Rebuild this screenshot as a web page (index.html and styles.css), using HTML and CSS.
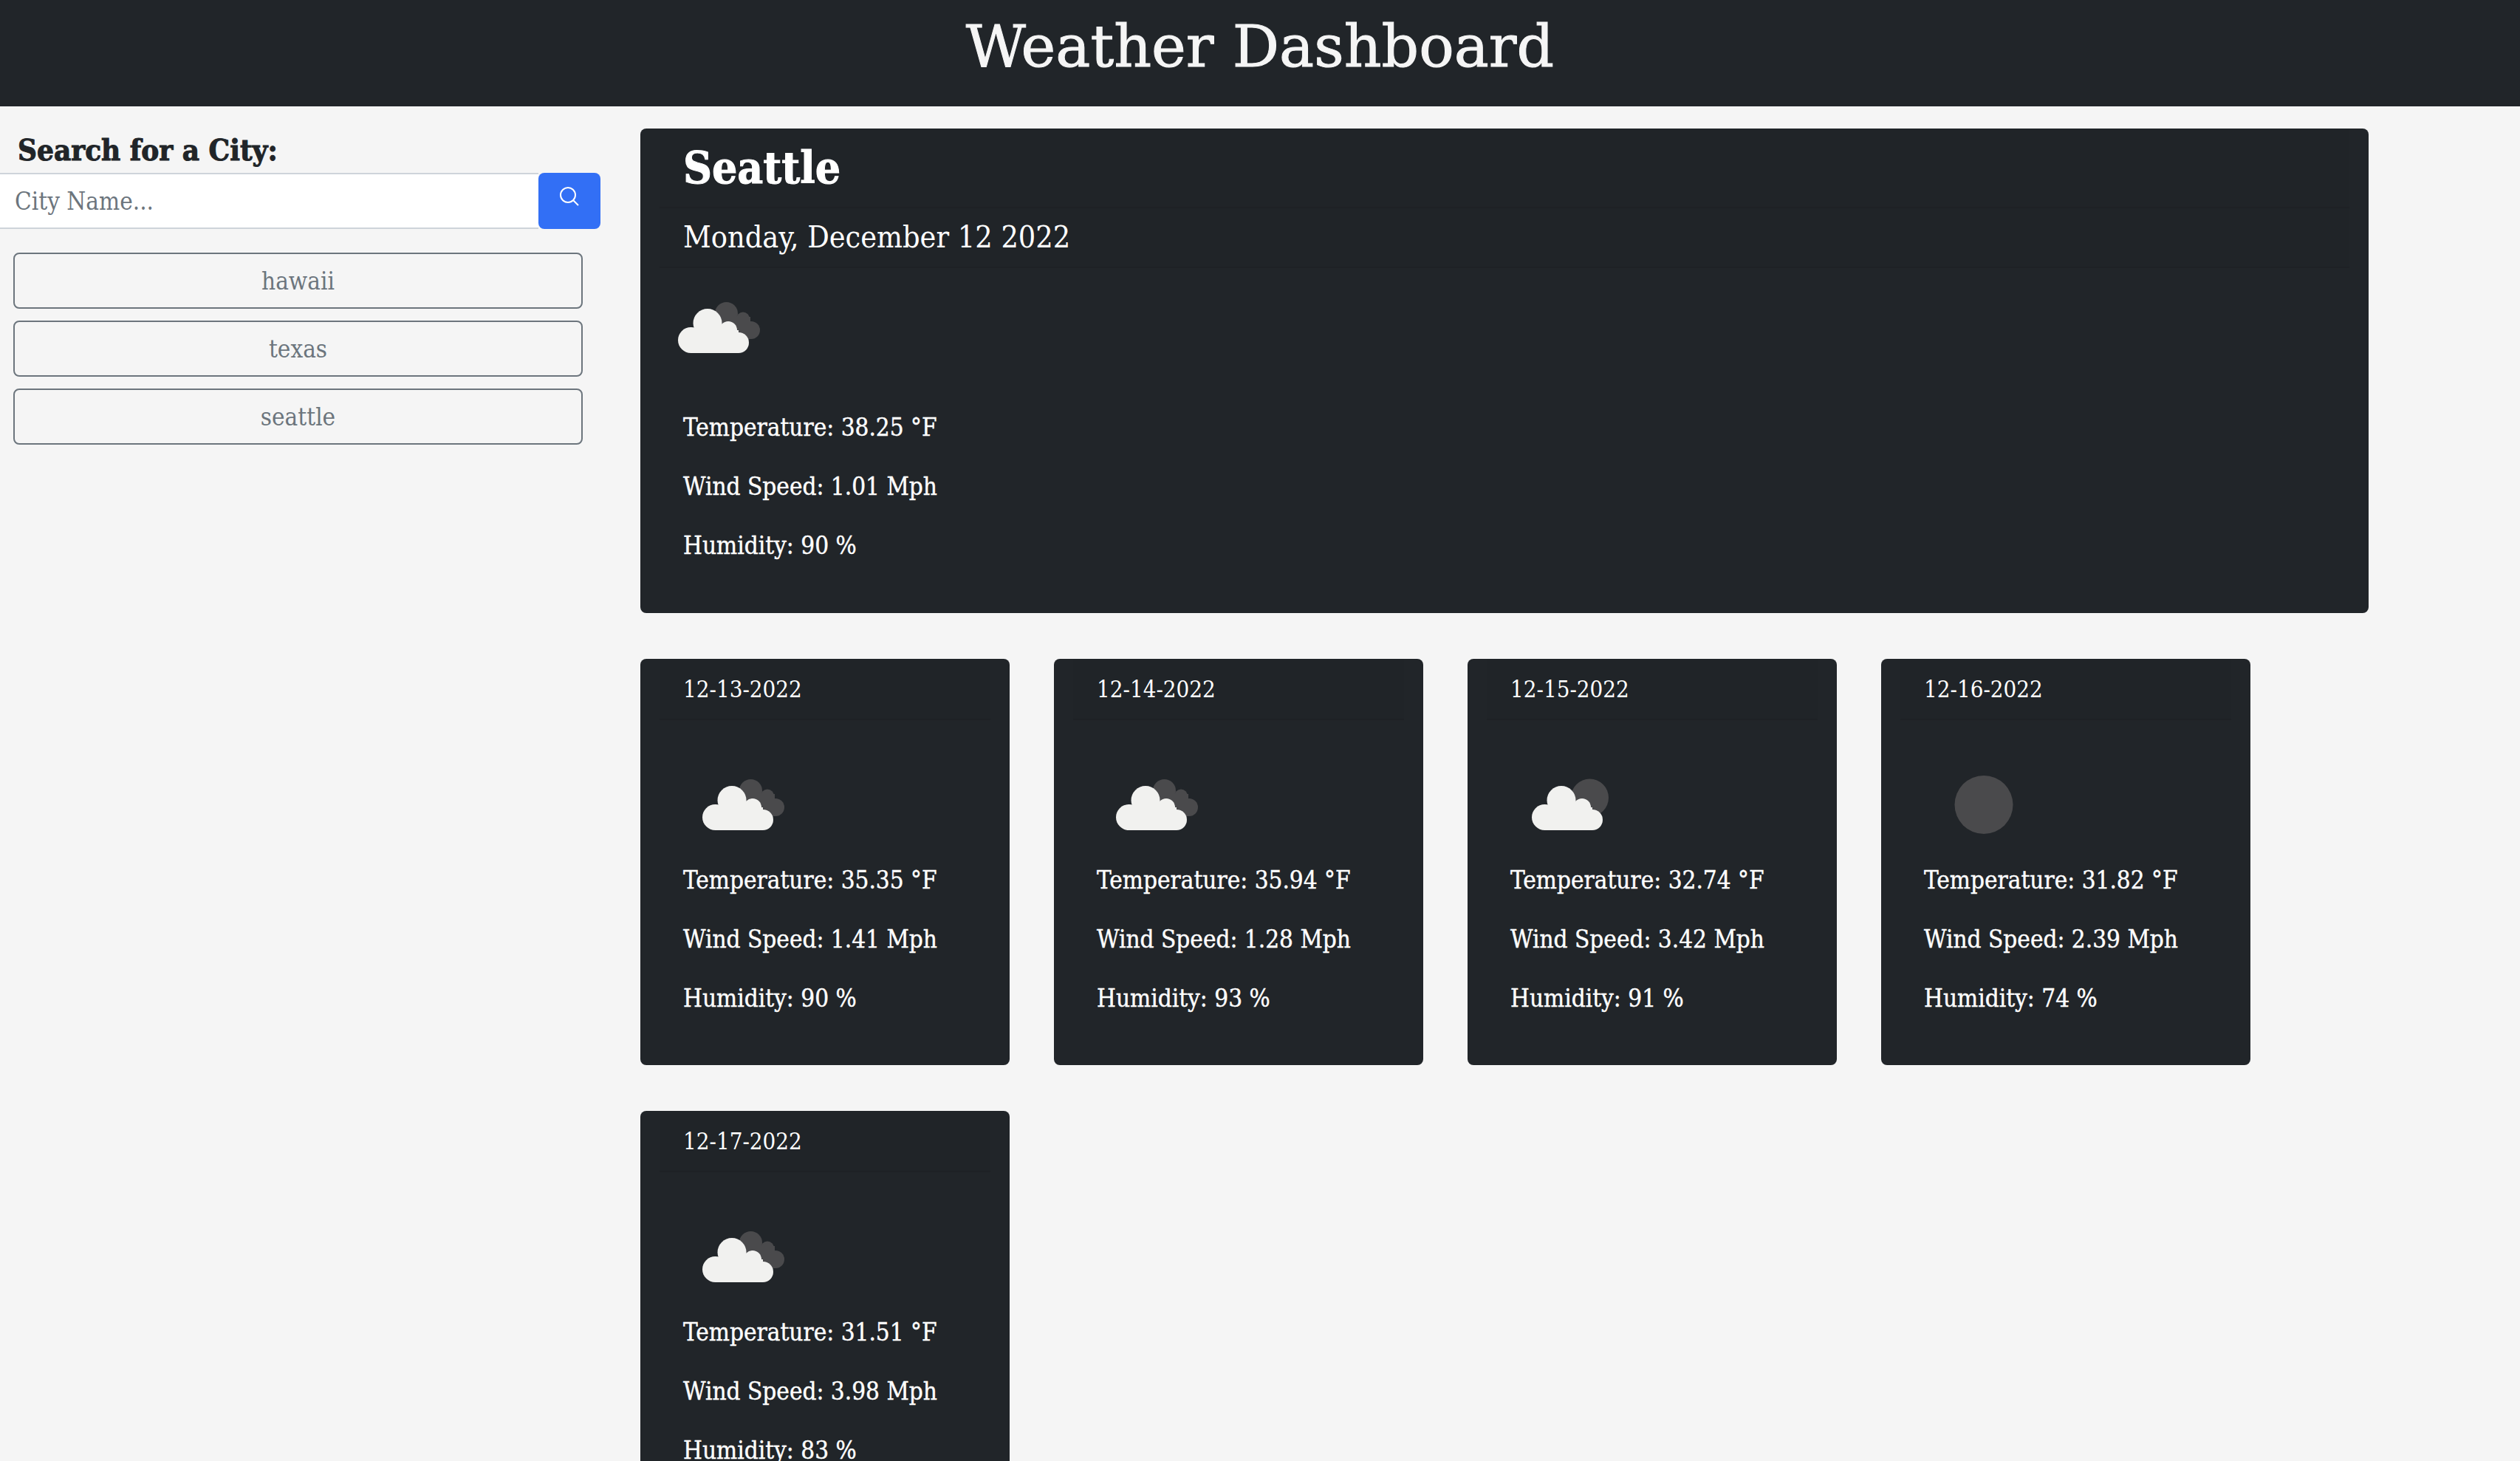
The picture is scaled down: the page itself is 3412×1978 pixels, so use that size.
FILE: index.html
```html
<!DOCTYPE html>
<html lang="en">
<head>
    <meta charset="UTF-8">
    <meta name="viewport" content="width=device-width, initial-scale=1.0">
    <title>Weather Dashboard</title>
    <link rel="stylesheet" href="styles.css">
</head>
<body>
    <svg class="icon-defs" width="0" height="0">
        <defs>
            <g id="cloud-front" fill="#f1f1ef">
                <circle cx="17.5" cy="51.5" r="17.5"/>
                <circle cx="40" cy="28.5" r="19.5"/>
                <circle cx="68" cy="38" r="12"/>
                <circle cx="82" cy="55" r="14"/>
                <rect x="17" y="38" width="65" height="31"/>
            </g>
            <g id="cloud-back" fill="#4a4a4c">
                <circle cx="65.5" cy="15.5" r="15.5"/>
                <circle cx="88" cy="22.5" r="9"/>
                <circle cx="99" cy="38" r="12"/>
                <rect x="60" y="20" width="38" height="30"/>
            </g>
        </defs>
    </svg>

    <header class="page-header">
        <h1>Weather Dashboard</h1>
    </header>

    <div class="page-grid">
        <aside class="search-col">
            <h2 class="search-title">Search for a City:</h2>
            <form class="search-form">
                <input type="text" class="search-input" placeholder="City Name...">
                <button type="button" class="search-btn" aria-label="Search">
                    <svg width="26" height="26" viewBox="0 0 26 26" fill="none" stroke="#fff" stroke-width="2"><circle cx="11" cy="11" r="10"/><line x1="18" y1="18" x2="25" y2="25"/></svg>
                </button>
            </form>
            <div class="history">
                <button type="button" class="history-btn">hawaii</button>
                <button type="button" class="history-btn">texas</button>
                <button type="button" class="history-btn">seattle</button>
            </div>
        </aside>

        <main class="weather-col">
            <section class="today-card">
                <div class="today-city">Seattle</div>
                <div class="today-date">Monday, December 12 2022</div>
                <div class="today-body">
                    <svg class="today-icon" width="111" height="69" viewBox="0 0 111 69"><use href="#cloud-back"/><use href="#cloud-front"/></svg>
                    <p>Temperature: 38.25 °F</p>
                    <p>Wind Speed: 1.01 Mph</p>
                    <p>Humidity: 90 %</p>
                </div>
            </section>

            <section class="forecast">
                <div class="day-card">
                    <div class="day-date">12-13-2022</div>
                    <div class="day-body">
                        <svg class="day-icon" width="111" height="69" viewBox="0 0 111 69"><use href="#cloud-back"/><use href="#cloud-front"/></svg>
                        <p>Temperature: 35.35 °F</p>
                        <p>Wind Speed: 1.41 Mph</p>
                        <p>Humidity: 90 %</p>
                    </div>
                </div>
                <div class="day-card">
                    <div class="day-date">12-14-2022</div>
                    <div class="day-body">
                        <svg class="day-icon" width="111" height="69" viewBox="0 0 111 69"><use href="#cloud-back"/><use href="#cloud-front"/></svg>
                        <p>Temperature: 35.94 °F</p>
                        <p>Wind Speed: 1.28 Mph</p>
                        <p>Humidity: 93 %</p>
                    </div>
                </div>
                <div class="day-card">
                    <div class="day-date">12-15-2022</div>
                    <div class="day-body">
                        <svg class="day-icon" width="111" height="69" viewBox="0 0 111 69"><circle cx="81.5" cy="25" r="25.5" fill="#4a4a4c"/><use href="#cloud-front" x="3"/></svg>
                        <p>Temperature: 32.74 °F</p>
                        <p>Wind Speed: 3.42 Mph</p>
                        <p>Humidity: 91 %</p>
                    </div>
                </div>
                <div class="day-card">
                    <div class="day-date">12-16-2022</div>
                    <div class="day-body">
                        <svg class="day-icon" width="111" height="69" viewBox="0 0 111 69"><circle cx="55" cy="34.5" r="39.5" fill="#4a4a4c"/></svg>
                        <p>Temperature: 31.82 °F</p>
                        <p>Wind Speed: 2.39 Mph</p>
                        <p>Humidity: 74 %</p>
                    </div>
                </div>
                <div class="day-card">
                    <div class="day-date">12-17-2022</div>
                    <div class="day-body">
                        <svg class="day-icon" width="111" height="69" viewBox="0 0 111 69"><use href="#cloud-back"/><use href="#cloud-front"/></svg>
                        <p>Temperature: 31.51 °F</p>
                        <p>Wind Speed: 3.98 Mph</p>
                        <p>Humidity: 83 %</p>
                    </div>
                </div>
            </section>
        </main>
    </div>
</body>
</html>
```

FILE: styles.css
```css
html, body {
    height: 100%;
    overflow: hidden;
}
body {
    margin: 0;
    background-color: #f5f5f5;
    color: #212529;
    font-family: "DejaVu Serif", "Liberation Serif", serif;
    font-stretch: condensed;
    font-size: 33px;
}
p {
    margin: 0;
}
.icon-defs {
    position: absolute;
}
.page-header {
    height: 144px;
    background-color: #212529;
    color: #f5f5f5;
    text-align: center;
}
.page-header h1 {
    margin: 0;
    font-size: 79px;
    font-stretch: normal;
    font-weight: 400;
    line-height: 126px;
    -webkit-text-stroke: 1px #f5f5f5;
}
.page-grid {
    display: grid;
    grid-template-columns: 867px 2340px;
}
.search-title {
    margin: 32px 0 4px 24px;
    font-size: 40px;
    line-height: 54px;
    -webkit-text-stroke: 1px #212529;
}
.search-form {
    display: flex;
    width: 813px;
    height: 76px;
}
.search-input {
    flex: 1;
    min-width: 0;
    padding: 0 20px;
    border: 0;
    border-top: 2px solid #ced4da;
    border-bottom: 2px solid #ced4da;
    background-color: #fff;
    font: inherit;
    font-stretch: condensed;
    color: #6c757d;
}
.search-input::placeholder {
    color: #6c757d;
}
.search-btn {
    width: 84px;
    border: 0;
    border-radius: 8px;
    background-color: #326ff5;
    padding: 0 0 10px;
}
.history {
    display: flex;
    flex-direction: column;
    gap: 16px;
    width: 771px;
    margin: 32px 0 0 18px;
}
.history-btn {
    height: 76px;
    border: 2px solid #6c757d;
    border-radius: 8px;
    background: transparent;
    color: #6c757d;
    font: inherit;
    font-stretch: condensed;
}
.weather-col {
    padding-top: 30px;
}
.today-card {
    height: 656px;
    padding: 0 26px;
    border-radius: 8px;
    background-color: #212529;
    color: #fff;
    box-sizing: border-box;
}
.today-city {
    height: 106px;
    padding-left: 32px;
    border-bottom: 2px solid #1e2125;
    background-color: rgba(0, 0, 0, 0.02);
    font-size: 60px;
    font-weight: 700;
    line-height: 106px;
    -webkit-text-stroke: 1px #fff;
}
.today-date {
    height: 79px;
    padding-left: 32px;
    border-bottom: 2px solid #1e2125;
    background-color: rgba(0, 0, 0, 0.02);
    font-size: 41px;
    line-height: 79px;
}
.today-body {
    padding: 46px 32px 0;
}
.today-icon {
    display: block;
    margin: 0 0 75px -7px;
    overflow: visible;
}
.today-body p, .day-body p {
    height: 52px;
    margin-bottom: 28px;
    line-height: 52px;
    -webkit-text-stroke: 0.4px #fff;
}
.forecast {
    display: flex;
    flex-wrap: wrap;
    gap: 62px 60px;
    margin-top: 62px;
}
.day-card {
    width: 500px;
    height: 550px;
    padding: 0 26px;
    border-radius: 8px;
    background-color: #212529;
    color: #fff;
    box-sizing: border-box;
}
.day-date {
    height: 81px;
    padding-left: 32px;
    border-bottom: 2px solid #1e2125;
    background-color: rgba(0, 0, 0, 0.02);
    font-size: 31px;
    line-height: 82px;
}
.day-body {
    padding: 80px 32px 0;
}
.day-icon {
    display: block;
    margin: 0 0 42px 26px;
    overflow: visible;
}
```
